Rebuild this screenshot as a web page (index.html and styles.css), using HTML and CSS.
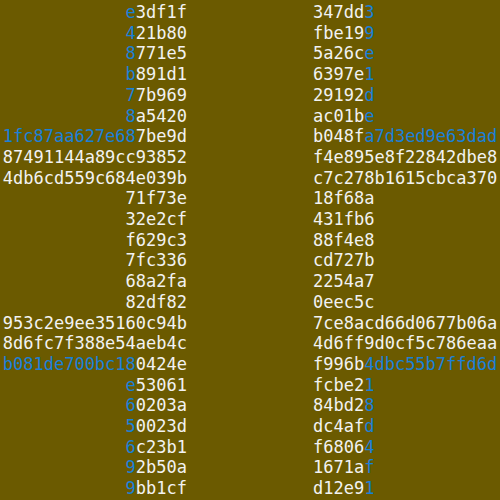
FILE: index.html
```html
<!DOCTYPE html>
<html>
<head>
<meta charset="utf-8">
<link rel="stylesheet" href="styles.css">
</head>
<body>
<div class="grid">
  <div class="col left">
    <div class="row"><span class="hl">e</span>3df1f</div>
    <div class="row"><span class="hl">4</span>21b80</div>
    <div class="row"><span class="hl">8</span>771e5</div>
    <div class="row"><span class="hl">b</span>891d1</div>
    <div class="row"><span class="hl">7</span>7b969</div>
    <div class="row"><span class="hl">8</span>a5420</div>
    <div class="row"><span class="hl">1fc87aa627e68</span>7be9d</div>
    <div class="row">87491144a89cc93852</div>
    <div class="row">4db6cd559c684e039b</div>
    <div class="row">71f73e</div>
    <div class="row">32e2cf</div>
    <div class="row">f629c3</div>
    <div class="row">7fc336</div>
    <div class="row">68a2fa</div>
    <div class="row">82df82</div>
    <div class="row">953c2e9ee35160c94b</div>
    <div class="row">8d6fc7f388e54aeb4c</div>
    <div class="row"><span class="hl">b081de700bc18</span>0424e</div>
    <div class="row"><span class="hl">e</span>53061</div>
    <div class="row"><span class="hl">6</span>0203a</div>
    <div class="row"><span class="hl">5</span>0023d</div>
    <div class="row"><span class="hl">6</span>c23b1</div>
    <div class="row"><span class="hl">9</span>2b50a</div>
    <div class="row"><span class="hl">9</span>bb1cf</div>
  </div>
  <div class="col right">
    <div class="row">347dd<span class="hl">3</span></div>
    <div class="row">fbe19<span class="hl">9</span></div>
    <div class="row">5a26c<span class="hl">e</span></div>
    <div class="row">6397e<span class="hl">1</span></div>
    <div class="row">29192<span class="hl">d</span></div>
    <div class="row">ac01b<span class="hl">e</span></div>
    <div class="row">b048f<span class="hl">a7d3ed9e63dad</span></div>
    <div class="row">f4e895e8f22842dbe8</div>
    <div class="row">c7c278b1615cbca370</div>
    <div class="row">18f68a</div>
    <div class="row">431fb6</div>
    <div class="row">88f4e8</div>
    <div class="row">cd727b</div>
    <div class="row">2254a7</div>
    <div class="row">0eec5c</div>
    <div class="row">7ce8acd66d0677b06a</div>
    <div class="row">4d6ff9d0cf5c786eaa</div>
    <div class="row">f996b<span class="hl">4dbc55b7ffd6d</span></div>
    <div class="row">fcbe2<span class="hl">1</span></div>
    <div class="row">84bd2<span class="hl">8</span></div>
    <div class="row">dc4af<span class="hl">d</span></div>
    <div class="row">f6806<span class="hl">4</span></div>
    <div class="row">1671a<span class="hl">f</span></div>
    <div class="row">d12e9<span class="hl">1</span></div>
  </div>
</div>
</body>
</html>
```
FILE: styles.css
```css
html, body {
  margin: 0;
  padding: 0;
  background: #6b5a00;
  height: 100%;
  overflow: hidden;
}
.grid {
  display: grid;
  grid-template-columns: 187px 1fr;
  column-gap: 126px;
  padding-top: 2px;
  font-family: "DejaVu Sans Mono", monospace;
  font-size: 17px;
  line-height: 20.7px;
  color: #f2f2f2;
  white-space: nowrap;
}
.left {
  text-align: right;
}
.right {
  text-align: left;
}
.hl {
  color: #1a80d8;
}
```
